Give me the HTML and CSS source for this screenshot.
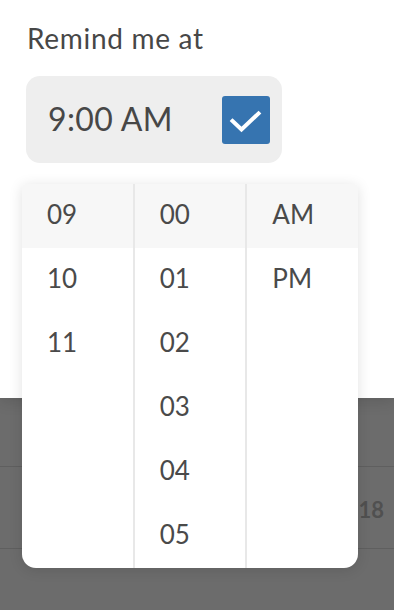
FILE: index.html
```html
<!DOCTYPE html>
<html lang="en">
<head>
  <meta charset="UTF-8">
  <meta name="viewport" content="width=device-width, initial-scale=1.0">
  <title>Remind me at</title>
  <link rel="stylesheet" href="styles.css">
</head>
<body>
  <div class="sheet">
    <div class="label">Remind me at</div>
    <div class="time-field">
      <span class="time-value">9:00 AM</span>
      <span class="check">
        <svg width="48" height="48" viewBox="0 0 48 48">
          <path d="M10.5 25 L19.5 33.5 L36.5 17.5" fill="none" stroke="#fff" stroke-width="4" stroke-linecap="square"/>
        </svg>
      </span>
    </div>
  </div>

  <div class="calendar">
    <div class="cal-row"></div>
    <div class="cal-row"><span class="cal-day">18</span></div>
    <div class="cal-row last"></div>
  </div>

  <div class="picker">
    <ul class="col">
      <li class="selected">09</li>
      <li>10</li>
      <li>11</li>
    </ul>
    <ul class="col">
      <li class="selected">00</li>
      <li>01</li>
      <li>02</li>
      <li>03</li>
      <li>04</li>
      <li>05</li>
    </ul>
    <ul class="col">
      <li class="selected">AM</li>
      <li>PM</li>
    </ul>
  </div>
</body>
</html>
```

FILE: styles.css
```css
body {
  margin: 0;
  background: #6c6c6c;
  font-family: Lato, "Open Sans", sans-serif;
  color: #474747;
  height: 610px;
  overflow: hidden;
  position: relative;
}

.sheet {
  background: #fff;
  height: 398px;
  box-sizing: border-box;
  padding: 21px 26px 0;
  box-shadow: 0 4px 14px rgba(0,0,0,0.12);
  position: relative;
}

.label {
  font-size: 28px;
  line-height: 34px;
  letter-spacing: 0.7px;
  margin-left: 1px;
}

.time-field {
  margin-top: 21px;
  width: 256px;
  height: 87px;
  box-sizing: border-box;
  background: #eeeeee;
  border-radius: 14px;
  display: flex;
  align-items: center;
  justify-content: space-between;
  padding: 0 12px 0 22px;
}

.time-value {
  font-size: 32px;
  letter-spacing: 0.4px;
  margin-top: -2px;
}

.check {
  width: 48px;
  height: 48px;
  background: #3674b0;
  border-radius: 3px;
  display: flex;
  margin-top: 1px;
}

.calendar {
  height: 212px;
}

.cal-row {
  height: 68px;
  border-bottom: 1px solid #5f5f5f;
  display: flex;
  justify-content: flex-end;
  align-items: center;
}

.cal-row + .cal-row {
  height: 81px;
}

.cal-row.last {
  border-bottom: none;
}

.cal-day {
  font-size: 22px;
  font-weight: 700;
  color: #505050;
  margin-right: 10px;
  margin-top: 4px;
}

.picker {
  position: absolute;
  left: 22px;
  top: 184px;
  width: 336px;
  height: 384px;
  background: #fff;
  border-radius: 4px 4px 14px 14px;
  box-shadow: 0 2px 14px rgba(0,0,0,0.12);
  display: flex;
  overflow: hidden;
}

.col {
  list-style: none;
  margin: 0;
  padding: 0;
  flex: 1;
  border-left: 2px solid #e8e8e8;
}

.col:first-child {
  border-left: none;
}

.col li {
  height: 64px;
  line-height: 60px;
  padding-left: 25px;
  font-size: 26px;
  color: #4a4a4a;
}

.col li.selected {
  background: #f7f7f7;
}
```
